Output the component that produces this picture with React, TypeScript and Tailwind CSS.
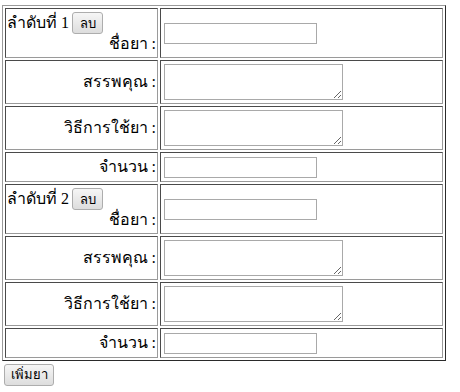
import { Fragment, useState } from 'react'

type Drug = { id: number }

const outerCell = 'border border-solid border-t-[#4a4a4a] border-l-[#4a4a4a] border-b-[#9a9a9a] border-r-[#9a9a9a] p-[1px]'

function TextInput() {
  return (
    <input
      type="text"
      className="ml-[2px] block w-[153px] h-[21px] border border-[#a9a9a9] bg-white px-[2px] text-[13px] outline-none"
    />
  )
}

function TextArea() {
  return (
    <textarea className="ml-[2px] block w-[179px] h-[36px] border border-[#a9a9a9] bg-white px-[2px] text-[13px] outline-none resize" />
  )
}

function OldButton({ label, className }: { label: string; className?: string }) {
  return (
    <button
      type="button"
      className={`inline-flex items-center justify-center h-[22px] rounded-[3px] border border-[#adadad] bg-gradient-to-b from-[#f6f6f6] to-[#dddddd] text-[13px] text-black leading-none ${className ?? ''}`}
      style={{ fontFamily: 'Tahoma, "DejaVu Sans", sans-serif' }}
    >
      {label}
    </button>
  )
}

export default function App() {
  const [drugs] = useState<Drug[]>([{ id: 1 }, { id: 2 }])

  return (
    <div className="min-h-screen bg-white text-black text-[16px]" style={{ fontFamily: '"Liberation Serif", "Times New Roman", serif' }}>
      <table className="ml-[2px] mt-[5px] w-[444px] border-separate border-spacing-[2px] border border-solid border-t-[#9a9a9a] border-l-[#9a9a9a] border-b-[#2a2a2a] border-r-[#2a2a2a]">
        <tbody>
          {drugs.map((drug, index) => (
            <Fragment key={drug.id}>
              {/* ชื่อยา */}
              <tr>
                <td className={`${outerCell} w-[153px] h-[50px] align-top`}>
                  <div className="flex items-center h-[24px] pt-[2px]">
                    <span>ลำดับที่ {index + 1}</span>
                    <OldButton label="ลบ" className="ml-[3px] w-[31px]" />
                  </div>
                  <div className="text-right leading-[20px]">ชื่อยา :</div>
                </td>
                <td className={`${outerCell} h-[50px] align-middle`}>
                  <TextInput />
                </td>
              </tr>
              {/* สรรพคุณ */}
              <tr>
                <td className={`${outerCell} h-[44px] text-right align-middle`}>สรรพคุณ :</td>
                <td className={`${outerCell} h-[44px] align-middle`}>
                  <TextArea />
                </td>
              </tr>
              {/* วิธีการใช้ยา */}
              <tr>
                <td className={`${outerCell} h-[44px] text-right align-middle`}>วิธีการใช้ยา :</td>
                <td className={`${outerCell} h-[44px] align-middle`}>
                  <TextArea />
                </td>
              </tr>
              {/* จำนวน */}
              <tr>
                <td className={`${outerCell} h-[30px] text-right align-middle`}>จำนวน :</td>
                <td className={`${outerCell} h-[30px] align-middle`}>
                  <TextInput />
                </td>
              </tr>
            </Fragment>
          ))}
        </tbody>
      </table>
      <div className="pl-[4px] pt-[1px]">
        <OldButton label="เพิ่มยา" className="w-[50px]" />
      </div>
    </div>
  )
}
